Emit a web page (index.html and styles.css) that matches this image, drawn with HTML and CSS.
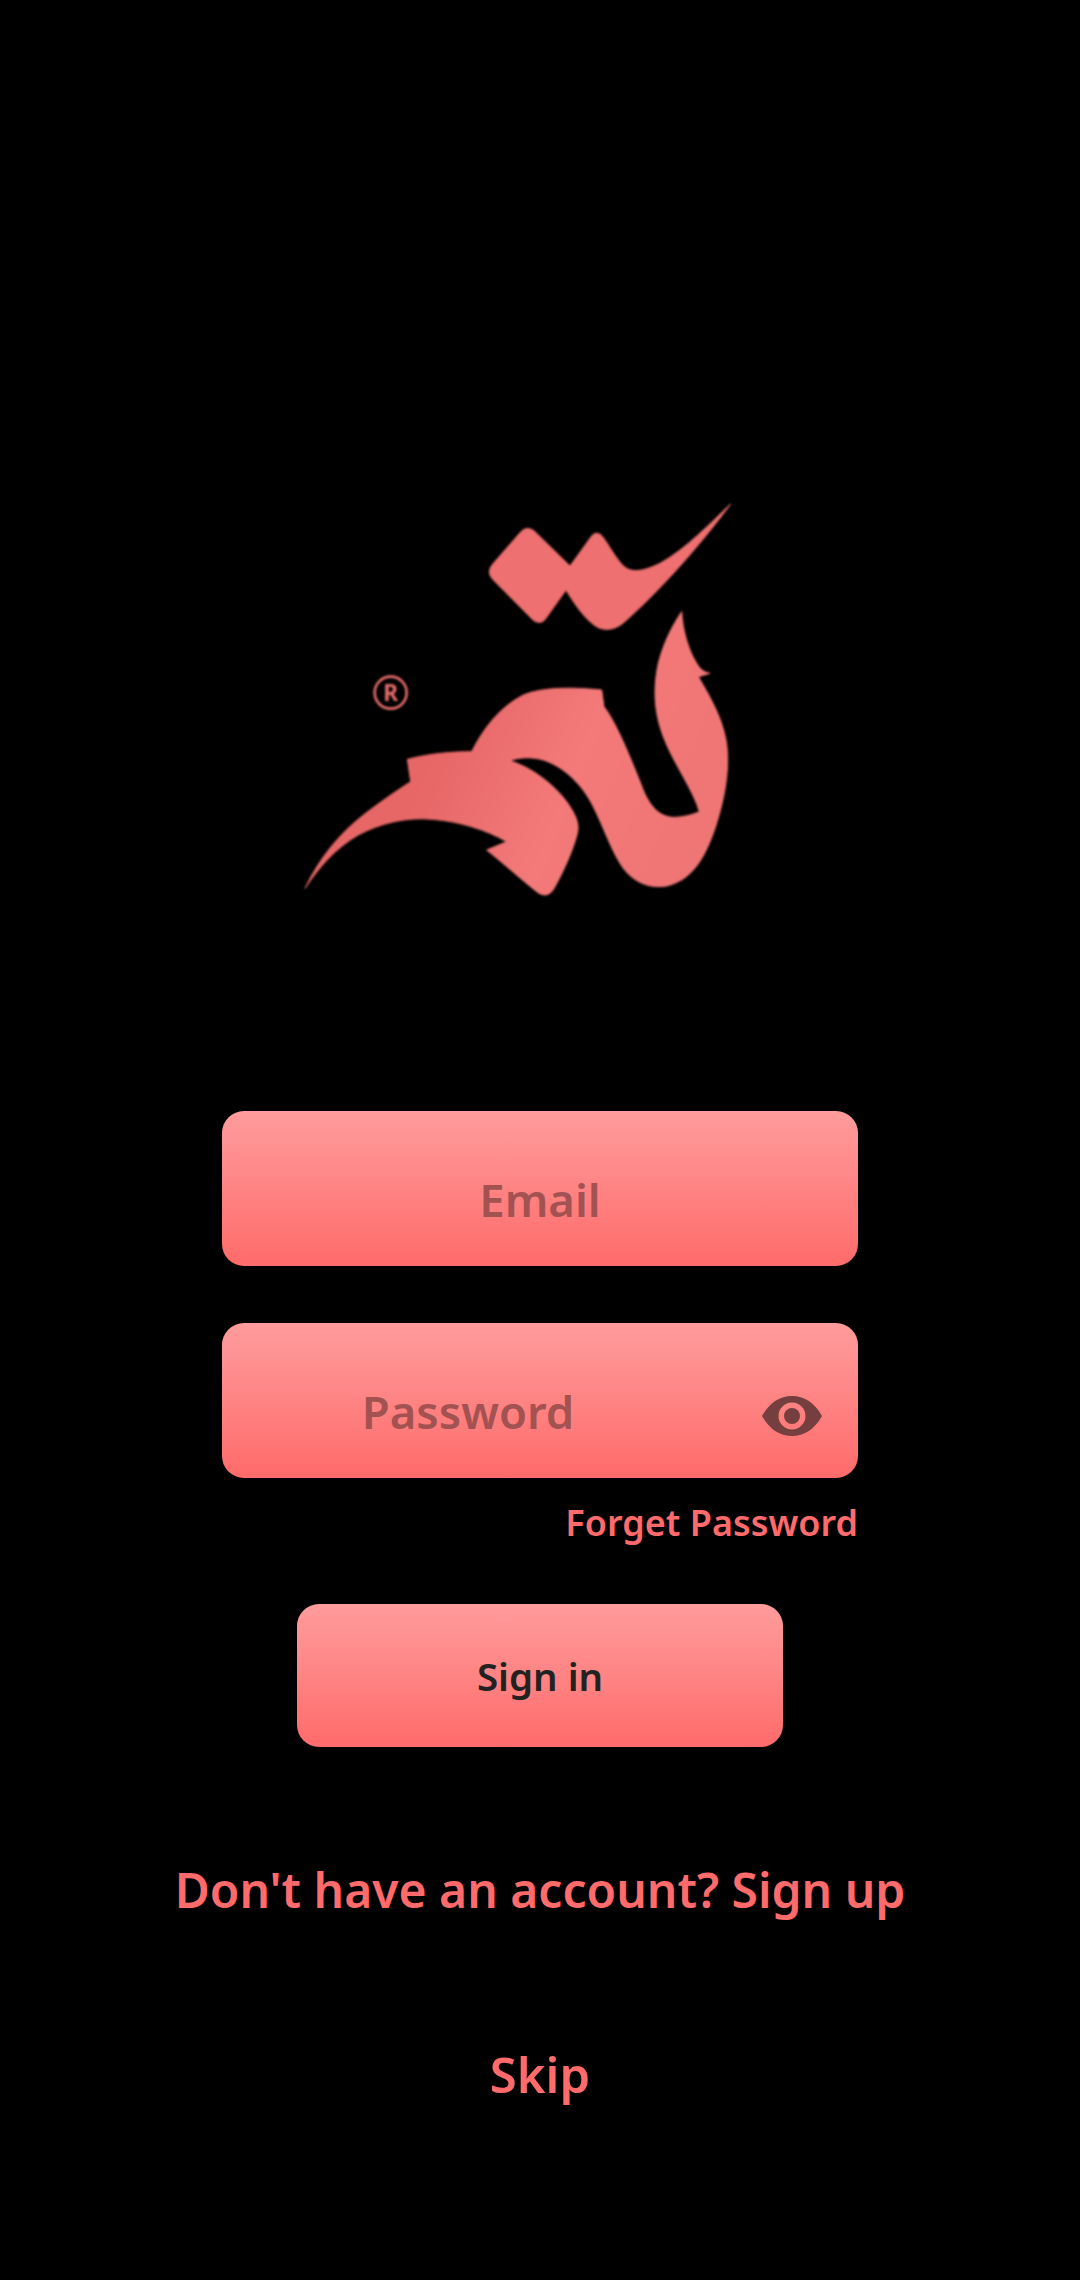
FILE: index.html
```html
<!DOCTYPE html>
<html lang="en">
<head>
<meta charset="utf-8">
<title>Sign in</title>
<link rel="stylesheet" href="styles.css">
</head>
<body>
<main class="screen">
  <svg class="logo" viewBox="0 0 1440 1290" role="img" aria-label="Logo">
    <defs>
      <linearGradient id="logoFill" x1="200" y1="700" x2="1200" y2="1100" gradientUnits="userSpaceOnUse">
        <stop offset="0" stop-color="#e66666"/>
        <stop offset="0.3" stop-color="#e86868"/>
        <stop offset="0.65" stop-color="#f47a7a"/>
        <stop offset="1" stop-color="#f07676"/>
      </linearGradient>
    </defs>
    <path class="logo-top" d="M1352 72C1250 210 1130 340 1040 420C1015 445 985 455 955 443C920 425 885 375 858 330L800 412C790 430 772 432 757 418L642 302C625 285 623 270 640 250L722 156C735 142 750 142 765 155L870 258L935 168C945 155 958 158 968 170C990 200 1010 240 1035 262C1060 280 1095 272 1140 250C1220 205 1290 130 1352 72Z"/>
    <path class="logo-base" stroke="url(#logoFill)" fill="url(#logoFill)" d="M75 1225C120 1130 180 1060 250 1005C295 970 345 935 392 905L382 838C450 820 520 815 575 815C610 745 660 680 730 645C790 620 880 622 965 630L972 680C1010 730 1050 830 1082 910C1105 975 1135 1010 1180 1012C1210 1012 1240 1003 1258 995C1240 930 1180 850 1150 770C1120 690 1120 620 1135 550C1150 490 1175 440 1205 395C1208 450 1225 510 1250 550C1262 570 1275 578 1290 580L1255 590C1290 650 1325 710 1338 780C1352 860 1335 960 1300 1060C1270 1140 1235 1200 1160 1218C1100 1228 1050 1200 1020 1150C990 1100 970 1040 940 980C905 910 850 860 790 840C755 830 715 832 690 842C750 860 820 910 860 965C885 1000 900 1030 892 1060C880 1110 850 1175 825 1220C810 1250 790 1250 770 1235C720 1195 670 1150 620 1110L680 1085C620 1050 540 1025 460 1018C380 1010 300 1030 235 1065C165 1105 115 1165 75 1225Z"/>
    <circle class="logo-ring" cx="332" cy="638" r="48"/>
    <text class="logo-r" x="332" y="663" text-anchor="middle">R</text>
  </svg>

  <form class="form">
    <div class="field"><span class="field-label">Email</span></div>
    <div class="field field-password">
      <span class="field-label">Password</span>
      <svg class="eye" viewBox="0 0 60 42" aria-hidden="true">
        <path fill="#753f3f" fill-rule="evenodd" d="M0 21C8 7 18 1 30 1S52 7 60 21C52 35 42 41 30 41S8 35 0 21ZM30 7.5a13.5 13.5 0 1 0 0 27a13.5 13.5 0 1 0 0-27ZM30 13a8 8 0 1 1 0 16a8 8 0 1 1 0-16Z"/>
      </svg>
    </div>
    <a class="forgot">Forget Password</a>
    <button class="signin" type="button">Sign in</button>
  </form>

  <a class="signup">Don't have an account? Sign up</a>
  <a class="skip">Skip</a>
</main>
</body>
</html>
```

FILE: styles.css
```css
* { box-sizing: border-box; }
html, body { margin: 0; background: #000; }
.screen {
  width: 1080px;
  height: 2280px;
  padding-top: 480px;
  display: flex;
  flex-direction: column;
  align-items: center;
  font-family: "Noto Sans", sans-serif;
  font-weight: 600;
  overflow: hidden;
}
.logo {
  width: 480px;
  height: 430px;
  margin-right: 40px;
  filter: blur(0.8px);
}
.logo-top {
  fill: #ee7070;
  stroke: #ee7070;
  stroke-width: 3;
  stroke-linejoin: round;
}
.logo-base {
  stroke-width: 3;
  stroke-linejoin: round;
}
.logo-ring {
  fill: none;
  stroke: #e86c6c;
  stroke-width: 8;
}
.logo-r {
  font-size: 68px;
  font-weight: 700;
  fill: #e86c6c;
  font-family: "Noto Sans", sans-serif;
}
.form {
  width: 636px;
  margin-top: 201px;
  display: flex;
  flex-direction: column;
  align-items: center;
}
.field {
  width: 636px;
  height: 155px;
  border-radius: 22px;
  background: linear-gradient(#ff9c9c, #ff6b6b);
  display: flex;
  align-items: center;
  padding-top: 20px;
  color: #a35252;
  font-size: 45.5px;
  line-height: 60px;
}
.field-label { flex: 1; text-align: center; }
.field-password { margin-top: 57px; }
.eye {
  width: 60px;
  height: 42px;
  margin-left: 48px;
  margin-right: 36px;
  flex: none;
  position: relative;
  top: 5px;
}
.forgot {
  align-self: flex-end;
  margin-top: 22px;
  color: #ff6b6b;
  font-size: 36px;
  line-height: 46px;
}
.signin {
  width: 486px;
  height: 143px;
  margin-top: 58px;
  border: 0;
  border-radius: 22px;
  background: linear-gradient(#ff9c9c, #ff6b6b);
  color: #222;
  font: inherit;
  font-size: 38.5px;
  padding-top: 2px;
}
.signup {
  margin-top: 110px;
  color: #ff6b6b;
  font-size: 48px;
  line-height: 66px;
}
.skip {
  margin-top: 118px;
  color: #ff6b6b;
  font-size: 49px;
  line-height: 66px;
}
```
